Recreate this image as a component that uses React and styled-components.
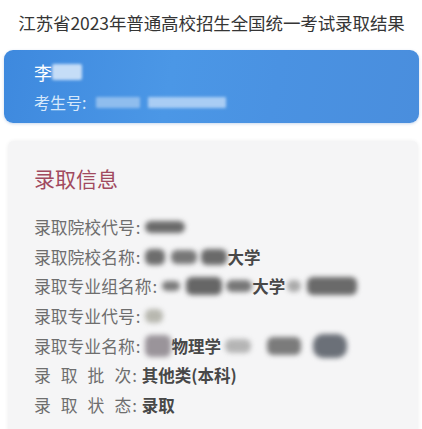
import React from "react";
import styled, { createGlobalStyle } from "styled-components";

const GlobalStyle = createGlobalStyle`
  html, body { margin: 0; padding: 0; background: #ffffff; }
  body { font-family: "Noto Sans CJK SC", "Noto Sans", sans-serif; }
  * { box-sizing: border-box; }
`;

const Page = styled.div`
  width: 422px;
  height: 429px;
  overflow: hidden;
  padding: 0 3px 0 4px;
  background: #fff;
`;

const Title = styled.h1`
  margin: 0;
  height: 44px;
  display: flex;
  align-items: center;
  justify-content: center;
  font-size: 17.5px;
  font-weight: 400;
  color: #353535;
  letter-spacing: -0.1px;
  white-space: nowrap;
`;

const BlueCard = styled.section`
  margin-top: 6px;
  height: 73px;
  border-radius: 9px;
  padding: 10px 30px 0;
  background: linear-gradient(100deg, #3e89de 0%, #4b97e6 40%, #4a92e2 65%, #4a8edd 100%);
  box-shadow: 0 1px 3px rgba(40, 100, 180, 0.25);
  display: flex;
  flex-direction: column;
`;

const NameLine = styled.div`
  display: flex;
  align-items: center;
  font-size: 18px;
  line-height: 24px;
  color: #ffffff;
`;

const ExamLine = styled.div`
  margin-top: 7px;
  display: flex;
  align-items: center;
  font-size: 16px;
  line-height: 22px;
  color: #d6e8fb;
`;

const Blur = styled.span`
  display: inline-block;
  flex: none;
  width: ${(p) => p.$w}px;
  height: ${(p) => p.$h || 14}px;
  margin-left: ${(p) => p.$ml || 0}px;
  background: ${(p) => p.$c};
  border-radius: ${(p) => p.$r || 6}px;
  filter: blur(${(p) => p.$b || 2.5}px);
  vertical-align: middle;
`;

const InfoCard = styled.section`
  margin: 18px 1px 0 4px;
  min-height: 300px;
  background: #f5f5f6;
  border-radius: 6px 6px 0 0;
  padding: 22px 26px 20px;
  box-shadow: 0 0 4px rgba(0, 0, 0, 0.07);
`;

const Heading = styled.h2`
  margin: 0;
  font-size: 21px;
  line-height: 30px;
  font-weight: 400;
  color: #a14a60;
`;

const Rows = styled.div`
  margin-top: 19px;
  display: flex;
  flex-direction: column;
`;

const Row = styled.div`
  height: 29.7px;
  display: flex;
  align-items: center;
  font-size: 16.8px;
  color: #6e6e6e;
  white-space: nowrap;
`;

const Label = styled.span`
  display: inline-flex;
  gap: ${(p) => (p.$spread ? "10px" : "0")};
`;

const Colon = styled.span`
  margin: 0 5px 0 1px;
`;

const Value = styled.span`
  font-weight: 700;
  color: #484848;
  font-size: 16.5px;
`;

const Group = styled.span`
  display: inline-flex;
  align-items: center;
`;

function Spread({ text }) {
  return (
    <Label $spread>
      {text.split("").map((c, i) => (
        <span key={i}>{c}</span>
      ))}
    </Label>
  );
}

export default function App() {
  return (
    <>
      <GlobalStyle />
      <Page>
        <Title>江苏省2023年普通高校招生全国统一考试录取结果</Title>
        <BlueCard>
          <NameLine>
            李
            <Blur $w={30} $h={16} $c="#c5ddf7" $r={2} $b={1.5} />
          </NameLine>
          <ExamLine>
            考生号:
            <Blur $w={44} $h={11} $ml={10} $c="#8fbdee" $r={1} $b={1.5} />
            <Blur $w={78} $h={11} $ml={8} $c="#a9cdf4" $r={1} $b={1.5} />
          </ExamLine>
        </BlueCard>
        <InfoCard>
          <Heading>录取信息</Heading>
          <Rows>
            <Row>
              <Label>录取院校代号</Label>
              <Colon>:</Colon>
              <Blur $w={40} $h={12} $c="#6a6a6a" $b={2.5} />
            </Row>
            <Row>
              <Label>录取院校名称</Label>
              <Colon>:</Colon>
              <Group>
                <Blur $w={20} $h={16} $c="#6d6d6d" $b={2.5} />
                <Blur $w={26} $h={14} $ml={6} $c="#777" $b={2.5} />
                <Blur $w={26} $h={16} $ml={4} $c="#6a6a6a" $b={2.5} />
                <Value>大学</Value>
              </Group>
            </Row>
            <Row>
              <Label>录取专业组名称</Label>
              <Colon>:</Colon>
              <Group>
                <Blur $w={18} $h={10} $c="#7a7a7a" $b={2.5} />
                <Blur $w={36} $h={18} $ml={6} $c="#666" $b={2.5} />
                <Blur $w={26} $h={12} $ml={4} $c="#777" $b={2.5} />
                <Value>大学</Value>
                <Blur $w={14} $h={12} $ml={2} $c="#aaa" $b={2.5} />
                <Blur $w={50} $h={18} $ml={6} $c="#6a6a6a" $b={2.5} />
              </Group>
            </Row>
            <Row>
              <Label>录取专业代号</Label>
              <Colon>:</Colon>
              <Blur $w={18} $h={14} $c="#b8b8b0" $b={2.5} />
            </Row>
            <Row>
              <Label>录取专业名称</Label>
              <Colon>:</Colon>
              <Group>
                <Blur $w={26} $h={22} $c="#9a949a" $b={2.5} />
                <Value>物理学</Value>
                <Blur $w={26} $h={14} $ml={4} $c="#b5b5b5" $b={2.5} />
                <Blur $w={34} $h={18} $ml={16} $c="#7b7b7b" $b={2.5} />
                <Blur $w={34} $h={24} $ml={12} $c="#6b7078" $b={2.5} $r={10} />
              </Group>
            </Row>
            <Row>
              <Spread text="录取批次" />
              <Colon>:</Colon>
              <Value>其他类(本科)</Value>
            </Row>
            <Row>
              <Spread text="录取状态" />
              <Colon>:</Colon>
              <Value>录取</Value>
            </Row>
          </Rows>
        </InfoCard>
      </Page>
    </>
  );
}
